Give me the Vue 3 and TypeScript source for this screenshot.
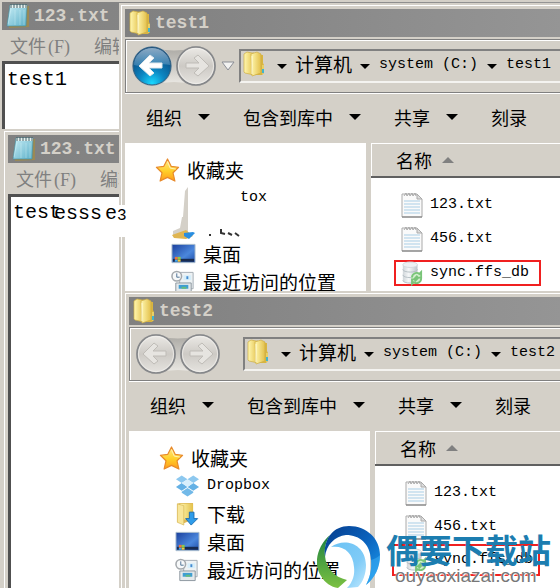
<script setup lang="ts">
interface Explorer {
  id: string
  title: string
  canGoBack: boolean
  places: { icon: string; label: string; latin?: boolean; erased?: boolean }[]
}

interface Notepad {
  id: string
  text: string
}

const notepads: Notepad[] = [
  { id: 'note-a', text: 'test1' },
  { id: 'note-b', text: 'test' },
]

const explorers: Explorer[] = [
  {
    id: 'exp-a',
    title: 'test1',
    canGoBack: true,
    places: [
      { icon: 'dropbox', label: 'tox', latin: true, erased: true },
      { icon: 'download', label: '', erased: true },
      { icon: 'desktop', label: '桌面' },
      { icon: 'recent', label: '最近访问的位置' },
    ],
  },
  {
    id: 'exp-b',
    title: 'test2',
    canGoBack: false,
    places: [
      { icon: 'dropbox', label: 'Dropbox', latin: true },
      { icon: 'download', label: '下载' },
      { icon: 'desktop', label: '桌面' },
      { icon: 'recent', label: '最近访问的位置' },
    ],
  },
]

const files = [
  { name: '123.txt', icon: 'text', marked: false },
  { name: '456.txt', icon: 'text', marked: false },
  { name: 'sync.ffs_db', icon: 'sync', marked: true },
]

const commands = [
  { label: '组织', menu: true },
  { label: '包含到库中', menu: true },
  { label: '共享', menu: true },
  { label: '刻录', menu: false },
]
</script>

<template>
  <div class="desktop">
    <svg class="defs" width="0" height="0" aria-hidden="true">
      <defs>
        <linearGradient id="gFolder" x1="0" x2="1"><stop offset="0" stop-color="#fff7b0" /><stop offset="1" stop-color="#e3c04a" /></linearGradient>
        <linearGradient id="gPad" x1="0" y1="0" x2="1" y2="1"><stop offset="0" stop-color="#c9eef6" /><stop offset="1" stop-color="#5cb0c8" /></linearGradient>
        <linearGradient id="gStar" x1="0" y1="0" x2="0" y2="1"><stop offset="0" stop-color="#ffe98c" /><stop offset=".55" stop-color="#ffcf28" /><stop offset="1" stop-color="#ff9a1c" /></linearGradient>
        <linearGradient id="gScreen" x1="0" y1="0" x2="1" y2="1"><stop offset="0" stop-color="#1b3f9c" /><stop offset=".6" stop-color="#4b87dc" /><stop offset="1" stop-color="#1e4ca8" /></linearGradient>
        <linearGradient id="gDisk" x1="0" x2="1"><stop offset="0" stop-color="#cfd5d9" /><stop offset=".4" stop-color="#f5f7f8" /><stop offset="1" stop-color="#bcc4ca" /></linearGradient>
        <radialGradient id="gBack" cx=".5" cy=".95" r=".85"><stop offset="0" stop-color="#19d8ff" /><stop offset=".4" stop-color="#0c86c2" /><stop offset="1" stop-color="#0a4378" /></radialGradient>
        <linearGradient id="gShine" x1="0" y1="0" x2="0" y2="1"><stop offset="0" stop-color="#e2f1fa" /><stop offset="1" stop-color="#4d90bd" /></linearGradient>
        <linearGradient id="gIdle" x1="0" y1="0" x2="0" y2="1"><stop offset="0" stop-color="#eceae6" /><stop offset=".5" stop-color="#cdcac5" /><stop offset="1" stop-color="#e6e4e0" /></linearGradient>
        <linearGradient id="gTrack" x1="0" y1="0" x2="0" y2="1"><stop offset="0" stop-color="#aaa8a3" /><stop offset="1" stop-color="#eceae5" /></linearGradient>
        <linearGradient id="gBlue" x1="0" y1="0" x2="1" y2="1"><stop offset="0" stop-color="#063c8c" /><stop offset=".5" stop-color="#0a62bd" /><stop offset="1" stop-color="#1fa0f2" /></linearGradient>
        <linearGradient id="gGreen" x1="0" y1="0" x2="0" y2="1"><stop offset="0" stop-color="#1d8240" /><stop offset="1" stop-color="#7cc142" /></linearGradient>
        <linearGradient id="gSky" x1="0" y1="0" x2="1" y2="1"><stop offset="0" stop-color="#6cc2f4" /><stop offset=".6" stop-color="#7fcbf7" /><stop offset="1" stop-color="#c0e9ff" /></linearGradient>
      </defs>
      <symbol id="i-folder" viewBox="0 0 22 26">
        <path d="M9 4h11v8l1 2v8l-2 2H9z" fill="#d9b53f" />
        <path d="M1 3l3-2 5 1h2v22l-9-2-1-1z" fill="url(#gFolder)" stroke="#d0af40" stroke-width=".7" />
        <path d="M8 3l6-2 4 2v19l-9 3z" fill="url(#gFolder)" stroke="#cfae46" stroke-width=".7" />
        <path d="M9 5v18" stroke="#fffbd8" />
        <path d="M19 14h2v8l-2 1z" fill="#e8cf67" />
        <path d="M19 18h2v4h-2z" fill="#42b4cd" />
      </symbol>
      <symbol id="i-notepad" viewBox="0 0 24 26">
        <path d="M5 3h18v21L3 25z" fill="#9b8954" />
        <path d="M4 2h17l-1 21H1z" fill="url(#gPad)" stroke="#438f9f" stroke-width=".6" />
        <path d="M4 2h17v3H4z" fill="#e7f1ef" />
        <path d="M5 1v4M8 1v4M11 1v4M14 1v4M17 1v4M20 1v4" stroke="#42636b" />
        <path d="M5 6L2 21M9 7v15M14 7v15M18 7v15" stroke="#e8ffff" stroke-opacity=".3" />
      </symbol>
      <symbol id="i-text" viewBox="0 0 22 26">
        <path d="M1 2h15l5 5v18H1z" fill="#fafafa" stroke="#aaa" />
        <path d="M16 2v5h5z" fill="#ddd" stroke="#aaa" />
        <path d="M3 4l2-3 1 3 2-3 1 3 2-3 1 3 2-3 1 3" stroke="#aaa" fill="none" />
        <path d="M3 9h16M3 12h16M3 15h16M3 18h16M3 21h16" stroke="#a9cee6" />
        <path d="M1 25h20" stroke="#777" />
      </symbol>
      <symbol id="i-sync" viewBox="0 0 24 26">
        <path d="M2 4v17c0 4 16 4 16 0V4" fill="url(#gDisk)" />
        <path d="M2 9c0 4 16 4 16 0M2 15c0 4 16 4 16 0M2 21c0 4 16 4 16 0" stroke="#b4bdc3" fill="none" />
        <ellipse cx="10" cy="4" rx="8" ry="3" fill="#eef1f3" stroke="#d2d8dc" />
        <circle cx="17" cy="18" r="6" fill="#d2eecd" />
        <path d="M12 18a5 5 0 0 1 8-4l2-2v6h-6l2-2M22 19a5 5 0 0 1-8 4l-2 2v-5h5l-2 2" fill="none" stroke="#79c478" stroke-width="2" />
      </symbol>
      <symbol id="i-star" viewBox="0 0 26 26">
        <path d="M13 1l4 8 8 1-6 6 2 9-8-4-8 4 2-9-6-6 8-1z" fill="url(#gStar)" stroke="#e88a2c" stroke-width="1.3" stroke-linejoin="round" />
        <path d="M13 4l3 7 6 1" stroke="#fff4bd" fill="none" />
      </symbol>
      <symbol id="i-dropbox" viewBox="0 0 26 24">
        <path d="M7 1l6 4-6 4-6-4zM19 1l6 4-6 4-6-4z" fill="#8dc8ef" />
        <path d="M7 9l6 4-6 4-6-4zM19 9l6 4-6 4-6-4z" fill="#65b1e5" />
        <path d="M13 5l6 4-6 4-6-4z" fill="#d8effc" />
        <path d="M13 14l6 4v1l-6 4-6-4v-1z" fill="#72b9e8" />
      </symbol>
      <symbol id="i-download" viewBox="0 0 26 26">
        <path d="M2 2l3-1h14v18l-10 4-7-1z" fill="#ddb957" />
        <path d="M5 2h14v17H9z" fill="url(#gFolder)" />
        <path d="M2 2l7 2v21l-7-3z" fill="#f8e69a" stroke="#d5b451" stroke-width=".7" />
        <path d="M15 11h5v7h4l-7 7-6-7h4z" fill="#2e9cea" stroke="#176bb2" />
      </symbol>
      <symbol id="i-desktop" viewBox="0 0 26 22">
        <path d="M1 1h24v19H1z" fill="url(#gScreen)" stroke="#aabccc" />
        <path d="M2 16h22v3H2z" fill="#182b50" />
        <path d="M4 14h3v3H4z" fill="#f0733a" /><path d="M7 14h3v3H7z" fill="#8bcb47" />
        <path d="M4 17h3v2H4z" fill="#41a8f0" /><path d="M7 17h3v2H7z" fill="#f6ca40" />
      </symbol>
      <symbol id="i-recent" viewBox="0 0 26 24">
        <path d="M9 2h14v17H9z" fill="#eef2f4" stroke="#a4adb4" />
        <path d="M13 5h8v5h-8z" fill="#d6eefa" /><path d="M16 6h2v3h-2z" fill="#448bd0" />
        <path d="M5 13h16v10H5z" fill="#e4e9eb" stroke="#8c979f" />
        <path d="M8 15h10v4H8z" fill="#3f9ed3" /><path d="M11 17h5v2h-5z" fill="#67bc7a" />
        <circle cx="6" cy="6" r="5" fill="#f7f9fa" stroke="#a4a9ad" stroke-width="1.6" />
        <path d="M6 3v4h3" stroke="#4e7295" fill="none" />
      </symbol>
      <symbol id="i-back" viewBox="0 0 42 42">
        <circle cx="21" cy="21" r="20" fill="#b9bec0" />
        <circle cx="21" cy="21" r="19" fill="url(#gBack)" stroke="#315f80" />
        <path d="M3 20a18 17 0 0 1 36 0c-10-3-26 3-36 0z" fill="url(#gShine)" opacity=".6" />
        <path d="M19 10l4 3-5 5h13v5H18l5 5-4 3-11-10z" fill="#fff" stroke="#e0e8ec" stroke-linejoin="round" />
      </symbol>
      <symbol id="i-idle" viewBox="0 0 42 42">
        <circle cx="21" cy="21" r="20" fill="#bbb8b3" />
        <circle cx="21" cy="21" r="19" fill="url(#gIdle)" stroke="#85878a" stroke-width="1.6" />
        <circle cx="21" cy="21" r="17.5" fill="none" stroke="#f3f2ef" stroke-opacity=".7" />
        <path d="M23 10l-4 3 5 5H11v5h13l-5 5 4 3 11-10z" fill="#e6e4e0" stroke="#bfbcb7" stroke-linejoin="round" />
      </symbol>
    </svg>

    <section v-for="note in notepads" :key="note.id" class="window" :class="note.id">
      <header class="titlebar"><svg class="pad-icon"><use href="#i-notepad" /></svg><h2>123.txt</h2></header>
      <nav class="menu">
        <button type="button">文件<span class="latin">(F)</span></button>
        <button type="button">编辑<span class="latin">(E)</span></button>
      </nav>
      <textarea class="editor" :value="note.text" aria-label="123.txt" spellcheck="false"></textarea>
    </section>

    <section v-for="win in explorers" :key="win.id" class="window explorer" :class="win.id">
      <header class="titlebar"><svg class="folder-icon"><use href="#i-folder" /></svg><h2>{{ win.title }}</h2></header>
      <div class="navbar">
        <div class="travel">
          <svg class="track" viewBox="0 0 84 42"><path d="M20 2Q42 9 64 2V40Q42 34 20 40z" fill="url(#gTrack)" /></svg>
          <button type="button" aria-label="后退">
            <svg v-if="win.canGoBack"><use href="#i-back" /></svg>
            <svg v-else class="flip"><use href="#i-idle" /></svg>
          </button>
          <button type="button" aria-label="前进"><svg><use href="#i-idle" /></svg></button>
        </div>
        <button type="button" class="history" aria-label="历史">
          <svg v-if="win.canGoBack" viewBox="0 0 14 10"><path d="M1 1h12L7 9z" fill="#f2f2f1" stroke="#8b8e96" /></svg>
        </button>
        <div class="address">
          <svg class="folder-icon"><use href="#i-folder" /></svg>
          <i class="caret small"></i>
          <button type="button" class="cjk">计算机</button>
          <i class="caret small"></i>
          <button type="button" class="latin">system (C:)</button>
          <i class="caret small"></i>
          <button type="button" class="latin">{{ win.title }}</button>
        </div>
      </div>
      <nav class="commands">
        <button v-for="cmd in commands" :key="cmd.label" type="button">{{ cmd.label }}<i v-if="cmd.menu" class="caret"></i></button>
        <button v-if="win.canGoBack" type="button">新建文件夹</button>
      </nav>
      <div class="panes">
        <nav class="places">
          <a href="#" class="favorites"><svg><use href="#i-star" /></svg>收藏夹</a>
          <a v-for="place in win.places" :key="place.icon" href="#" :class="{ latin: place.latin, erased: place.erased }">
            <svg v-if="!place.erased"><use :href="'#i-' + place.icon" /></svg>{{ place.label }}
          </a>
          <svg v-if="win.canGoBack" class="smudge" viewBox="0 0 90 56">
            <path d="M13 5l3-4v48H1v-4l7-3 2-11h1z" fill="#d4d0c8" />
            <path d="M0 49l14-5 7 6-7 3-12-1z" fill="#dfb551" />
            <path d="M12 47l9-1 2 1-6 6-5-3z" fill="#298ee0" />
            <path d="M38 48v2M49 43v4l4 1M56 47l4 2M63 47l4 3" stroke="#333" stroke-width="2" fill="none" />
          </svg>
        </nav>
        <div class="content">
          <table>
            <thead><tr><th scope="col"><button type="button">名称<i class="sort"></i></button></th></tr></thead>
            <tbody>
              <tr v-for="file in files" :key="file.name">
                <td><a href="#" :class="{ marked: file.marked }"><svg><use :href="'#i-' + file.icon" /></svg>{{ file.name }}</a></td>
              </tr>
            </tbody>
          </table>
        </div>
      </div>
    </section>

    <div class="patch"></div>
    <div class="residue"><span>esss</span><span>e</span><span class="tail">3</span></div>

    <div class="watermark">
      <svg viewBox="0 0 64 62" aria-hidden="true">
        <path d="M13 9C0 20-4 38 4 50c4 7 10 11 17 12l9-8C17 51 9 42 8 30 7 22 9 15 13 9z" fill="url(#gGreen)" />
        <path d="M8 31C6 12 17 0 32 0c18 0 31 13 31 29 0 12-5 23-14 30 4-8 6-16 5-25C53 18 43 9 29 9 18 10 9 19 8 31z" fill="url(#gBlue)" />
        <path d="M14 21c12-9 34-5 35 18 0 9-3 17-8 22l-11 1c6-6 8-14 7-21-1-14-10-22-23-20z" fill="url(#gSky)" />
        <path d="M54 34c3-1 6-2 9-5 0 12-5 23-14 30 4-8 6-16 5-25z" fill="#41b4f8" opacity=".5" />
      </svg>
      <div class="brand"><strong>偶要下载站</strong><span>ouyaoxiazai.com</span></div>
    </div>
  </div>
</template>

<style>
body {
  margin: 0;
  overflow: hidden;
}
</style>

<style scoped>
.desktop {
  position: relative;
  height: 100vh;
  overflow: hidden;
  background: #d4d0c8;
  color: #000;
  font: 18px/24px "Noto Sans CJK SC", sans-serif;
}
.desktop * {
  box-sizing: border-box;
}
.defs {
  position: absolute;
}
svg {
  display: block;
  flex: none;
}
button {
  padding: 0;
  border: 0;
  background: none;
  color: inherit;
  font: inherit;
  white-space: nowrap;
}
a {
  color: inherit;
  text-decoration: none;
}
.window {
  position: absolute;
  right: -8px;
  bottom: -8px;
  display: flex;
  flex-direction: column;
  padding: 4px;
  background: #d4d0c8;
  border: 2px solid #d4d0c8;
  box-shadow: inset 1px 1px #fff;
}
.note-a { left: -4px; top: -4px; }
.note-b { left: 2px; top: 129px; }
.exp-a { left: 119px; top: 3px; }
.exp-b { left: 123px; top: 291px; }
.titlebar {
  display: flex;
  align-items: center;
  gap: 4px;
  height: 28px;
  padding-left: 4px;
  flex: none;
  background: linear-gradient(90deg, #808080, #959595);
  color: #d4d0c8;
}
h2 {
  margin: 0;
  font: bold 18px/28px "Liberation Mono", monospace;
}
.pad-icon { width: 24px; height: 26px; }
.folder-icon { width: 22px; height: 26px; }
.menu {
  display: flex;
  gap: 24px;
  height: 31px;
  flex: none;
  padding-left: 8px;
  color: #808080;
}
.menu .latin {
  padding-left: 2px;
  font-family: "Liberation Serif", serif;
  font-size: 18px;
}
.editor {
  flex: 1;
  min-height: 0;
  width: 100%;
  margin: 0;
  padding: 4px 2px;
  resize: none;
  outline: 0;
  border: 0 solid;
  border-width: 3px 0 0 3px;
  border-color: #505050;
  border-radius: 0;
  background: #fff;
  color: #000;
  font: 20px/24px "Liberation Mono", monospace;
}
.latin {
  font-family: "Liberation Mono", monospace;
  font-size: 15px;
}
.cjk { font-size: 19px; }
.navbar {
  display: flex;
  align-items: center;
  height: 54px;
  margin-top: 2px;
  padding-left: 5px;
  flex: none;
  border: 1px solid #808080;
  box-shadow: inset 1px 1px #fff, 0 1px #fff;
}
.travel {
  position: relative;
  display: flex;
  gap: 2px;
}
.travel button, .travel button svg {
  position: relative;
  width: 42px;
  height: 42px;
}
.track {
  position: absolute;
  inset: 0;
  width: 100%;
  height: 100%;
}
.flip { transform: scaleX(-1); }
.history {
  width: 22px;
  display: grid;
  place-items: center;
}
.history svg { width: 14px; height: 10px; }
.address {
  display: flex;
  align-items: center;
  flex: 1;
  height: 34px;
  padding-left: 2px;
  padding-bottom: 4px;
  border: 1px solid #808080;
  border-width: 2px 0 2px 2px;
  border-bottom-color: #f4f3f0;
}
.address .caret { margin: 4px 9px 0; }
.address .folder-icon + .caret { margin-left: 12px; margin-right: 8px; }
.address .latin { padding-top: 2px; }
.address .cjk + .caret { margin-left: 8px; }
.caret {
  display: inline-block;
  flex: none;
  border: 6px solid transparent;
  border-top-color: #000;
  border-bottom: 0;
}
.caret.small {
  border-width: 5px;
  border-bottom: 0;
}
.commands {
  display: flex;
  align-items: center;
  gap: 33px;
  height: 50px;
  flex: none;
  padding: 0 0 2px 21px;
}
.commands button {
  display: flex;
  align-items: center;
  gap: 16px;
}
.panes {
  display: flex;
  flex: 1;
  min-height: 0;
  gap: 5px;
}
.places {
  position: relative;
  width: 241px;
  flex: none;
  padding-top: 13px;
  overflow: hidden;
  background: #fff;
}
.places a {
  display: flex;
  align-items: center;
  gap: 7px;
  height: 28px;
  padding-left: 46px;
  white-space: nowrap;
  font-size: 19px;
}
.places a.latin { font-size: 15px; }
.places a svg { width: 25px; height: 24px; }
.places .favorites { padding-left: 30px; }
.places .erased { padding-left: 115px; }
.smudge {
  position: absolute;
  left: 47px;
  top: 43px;
  width: 90px;
  height: 56px;
}
.content {
  flex: 1;
  background: #fff;
}
table {
  width: 100%;
  border-collapse: collapse;
}
th {
  height: 34px;
  padding: 0 0 0 25px;
  text-align: left;
  font-weight: 400;
  background: #d4d0c8;
  border-bottom: 2px solid #606060;
  box-shadow: inset 1px 1px #fff;
}
th button {
  display: flex;
  align-items: center;
  gap: 10px;
}
.sort {
  border: 6px solid transparent;
  border-top: 0;
  border-bottom-color: #808080;
}
tbody::before {
  content: "";
  display: block;
  height: 9px;
}
td {
  height: 34px;
  padding: 0 0 0 23px;
}
td a {
  display: inline-flex;
  align-items: center;
  gap: 7px;
  height: 26px;
  padding: 0 10px 0 7px;
  vertical-align: middle;
  font: 15px/24px "Liberation Mono", monospace;
}
td a svg { width: 22px; height: 26px; }
.marked {
  padding-left: 5px;
  border: 2px solid #f02020;
}
.exp-b td { padding-left: 17px; }
.exp-b td a { padding-left: 13px; }
.exp-b .marked {
  height: 32px;
  padding-left: 11px;
  padding-right: 5px;
}
.patch {
  position: absolute;
  left: 118px;
  top: 205px;
  width: 8px;
  height: 32px;
  background: #fff;
}
.residue {
  position: absolute;
  left: 54px;
  top: 202px;
  display: flex;
  gap: 3px;
  font: 20px/24px "Liberation Mono", monospace;
}
.residue .tail {
  padding-top: 2px;
  margin-left: -3px;
  font-size: 16px;
}
.watermark {
  position: absolute;
  left: 317px;
  top: 526px;
  display: flex;
  gap: 5px;
}
.watermark svg { width: 64px; height: 62px; }
.brand {
  display: flex;
  flex-direction: column;
  align-items: center;
  padding-top: 6px;
}
.brand strong {
  color: #1c7db0;
  font: bold 33px/34px "Noto Sans CJK SC", sans-serif;
}
.brand span {
  align-self: flex-start;
  margin-left: 9px;
  color: #777;
  font: 19px/20px "Liberation Sans", sans-serif;
  text-shadow: 0 0 2px #fff, 1px 1px #fff;
}
</style>
